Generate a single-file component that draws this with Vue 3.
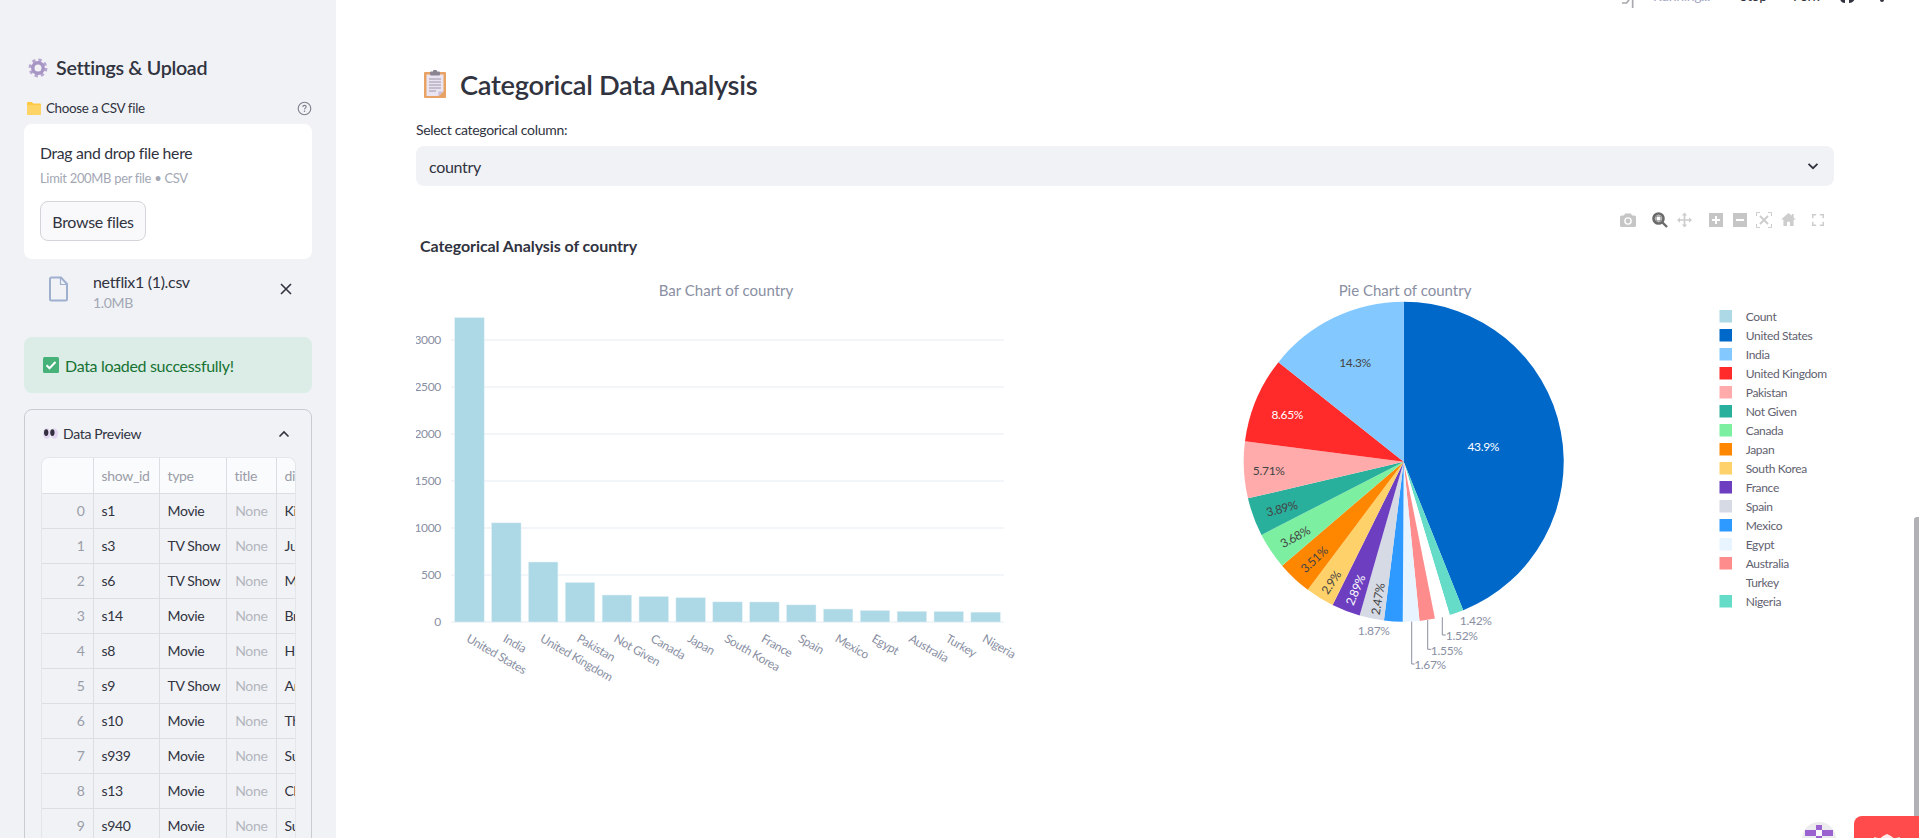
<script setup>
const rows = [
  ['s1', 'Movie', 'Kirsten Johnson'],
  ['s3', 'TV Show', 'Julien Leclercq'],
  ['s6', 'TV Show', 'Mike Flanagan'],
  ['s14', 'Movie', 'Bruno Garotti'],
  ['s8', 'Movie', 'Haile Gerima'],
  ['s9', 'TV Show', 'Andy Devonshire'],
  ['s10', 'Movie', 'Theodore Melfi'],
  ['s939', 'Movie', 'Sudhanshu Sarin'],
  ['s13', 'Movie', 'Christian Schwochow'],
  ['s940', 'Movie', 'Suhas Kadav']
]

const countries = [
  { name: 'United States', pct: 43.9, color: '#0068c9' },
  { name: 'India', pct: 14.3, color: '#83c9ff' },
  { name: 'United Kingdom', pct: 8.65, color: '#ff2b2b' },
  { name: 'Pakistan', pct: 5.71, color: '#ffabab' },
  { name: 'Not Given', pct: 3.89, color: '#29b09d' },
  { name: 'Canada', pct: 3.68, color: '#7defa1' },
  { name: 'Japan', pct: 3.51, color: '#ff8700' },
  { name: 'South Korea', pct: 2.9, color: '#ffd16a' },
  { name: 'France', pct: 2.89, color: '#6d3fc0' },
  { name: 'Spain', pct: 2.47, color: '#d5dae5' },
  { name: 'Mexico', pct: 1.87, color: '#2e9aff' },
  { name: 'Egypt', pct: 1.67, color: '#e8f4ff' },
  { name: 'Australia', pct: 1.55, color: '#ff8c8c' },
  { name: 'Turkey', pct: 1.52, color: '#ffffff' },
  { name: 'Nigeria', pct: 1.42, color: '#64dcc8' }
]

// bar chart, in page coordinates (see the svg viewBox)
const baseY = 622
const yScale = 47 / 500
const pitch = 36.87
const ticks = [0, 500, 1000, 1500, 2000, 2500, 3000]
const tickY = (v) => baseY - v * yScale
const bars = countries.map((c, i) => {
  const value = c.pct * 73.76
  const center = 451 + pitch * (i + 0.5)
  return { name: c.name, x: center - 14.75, center, h: value * yScale }
})

// pie: first slice from 12 o'clock, the rest run back from the smallest
const cx = 1403.7
const cy = 461.7
const r = 160
const total = countries.reduce((s, c) => s + c.pct, 0)
const pieOrder = [countries[0], ...countries.slice(1).reverse()]
let acc = 0
const slices = pieOrder.map((c) => {
  const a0 = (acc / total) * Math.PI * 2
  acc += c.pct
  const a1 = (acc / total) * Math.PI * 2
  const large = a1 - a0 > Math.PI ? 1 : 0
  const p = (a) => `${(cx + r * Math.sin(a)).toFixed(2)} ${(cy - r * Math.cos(a)).toFixed(2)}`
  return { color: c.color, d: `M${cx} ${cy}L${p(a0)}A${r} ${r} 0 ${large} 1 ${p(a1)}Z` }
})

const pieLabels = [
  { t: '43.9%', x: 1483.3, y: 446.7, fill: '#fff', rot: 0 },
  { t: '14.3%', x: 1355, y: 362, fill: '#444', rot: 0 },
  { t: '8.65%', x: 1287.3, y: 414, fill: '#fff', rot: 0 },
  { t: '5.71%', x: 1268.7, y: 470, fill: '#444', rot: 0 },
  { t: '3.89%', x: 1281.7, y: 508.3, fill: '#444', rot: -15 },
  { t: '3.68%', x: 1295, y: 536.7, fill: '#444', rot: -29 },
  { t: '3.51%', x: 1314, y: 559.3, fill: '#444', rot: -43 },
  { t: '2.9%', x: 1331, y: 582.3, fill: '#444', rot: -56 },
  { t: '2.89%', x: 1355.3, y: 590, fill: '#fff', rot: -67 },
  { t: '2.47%', x: 1377.7, y: 599, fill: '#444', rot: -80 },
  { t: '1.87%', x: 1373.7, y: 630, fill: '#8a8fa3', rot: 0 },
  { t: '1.42%', x: 1475.7, y: 620, fill: '#8a8fa3', rot: 0 },
  { t: '1.52%', x: 1461.7, y: 635, fill: '#8a8fa3', rot: 0 },
  { t: '1.55%', x: 1446.7, y: 650, fill: '#8a8fa3', rot: 0 },
  { t: '1.67%', x: 1430, y: 664, fill: '#8a8fa3', rot: 0 }
]

const legend = [{ name: 'Count', color: '#add8e6' }, ...countries]
</script>

<template>
  <div class="page">
    <aside class="sidebar">
      <h3 class="side-title">
        <svg class="emoji-gear" viewBox="0 0 20 20">
          <circle cx="10" cy="10" r="7.6" fill="none" stroke="#b7a6d0" stroke-width="3.6" stroke-dasharray="3.1 2.9" />
          <circle cx="10" cy="10" r="5.2" fill="none" stroke="#a795c4" stroke-width="3.4" />
          <circle cx="10" cy="10" r="2.6" fill="#f3f1f6" />
        </svg>
        Settings &amp; Upload
      </h3>

      <div class="field-label">
        <svg class="emoji-folder" viewBox="0 0 14 13">
          <path d="M0 1.2C0 .5.5 0 1.2 0h3.6l1.6 1.6h6.4c.7 0 1.2.5 1.2 1.2v9c0 .7-.5 1.2-1.2 1.2H1.2C.5 13 0 12.500 0 11.800Z" fill="#ffc843" />
          <rect x="0" y="3" width="14" height="10" rx="1" fill="#ffd466" />
        </svg>
        <span>Choose a CSV file</span>
        <svg class="help" viewBox="0 0 16 16">
          <circle cx="8" cy="8" r="6.7" fill="none" stroke="#7d808c" stroke-width="1.200" />
          <path d="M6.200 6.300c0-1 .8-1.700 1.800-1.700s1.800.7 1.800 1.600c0 1.300-1.800 1.400-1.800 2.800" fill="none" stroke="#7d808c" stroke-width="1.200" />
          <circle cx="8" cy="11" r=".8" fill="#7d808c" />
        </svg>
      </div>

      <div class="dropzone">
        <div class="drop-title">Drag and drop file here</div>
        <div class="drop-hint">Limit 200MB per file • CSV</div>
        <button class="browse">Browse files</button>
      </div>

      <div class="file-row">
        <svg class="file-icon" viewBox="0 0 20 26">
          <path d="M2.500 1.500h9.500l6 6.500v15a1.500 1.500 0 0 1-1.500 1.500h-14A1.500 1.500 0 0 1 1 23V3a1.500 1.500 0 0 1 1.500-1.500Z" fill="none" stroke="#9fb0cf" stroke-width="2" />
          <path d="M11.500 1.500v7h6.500" fill="none" stroke="#9fb0cf" stroke-width="1.200" />
        </svg>
        <div class="file-meta">
          <div class="file-name">netflix1 (1).csv</div>
          <div class="file-size">1.0MB</div>
        </div>
        <svg class="file-x" viewBox="0 0 12 12">
          <path d="M1 1l10 10M11 1L1 11" stroke="#31333f" stroke-width="1.600" fill="none" />
        </svg>
      </div>

      <div class="success">
        <svg class="emoji-check" viewBox="0 0 16 16">
          <rect width="16" height="16" rx="1.500" fill="#46b27a" />
          <path d="M3.500 8.300l3 3 6-6.300" stroke="#fff" stroke-width="2" fill="none" />
        </svg>
        Data loaded successfully!
      </div>

      <div class="expander">
        <div class="exp-head">
          <svg class="emoji-eyes" viewBox="0 0 16 11">
            <ellipse cx="4" cy="5.500" rx="4" ry="5.500" fill="#e2d6f0" />
            <ellipse cx="12" cy="5.500" rx="4" ry="5.500" fill="#e2d6f0" />
            <ellipse cx="3.400" cy="4.500" rx="2.300" ry="3.600" fill="#34303f" />
            <ellipse cx="10" cy="4.500" rx="2.300" ry="3.600" fill="#34303f" />
          </svg>
          <span>Data Preview</span>
          <svg class="chev-up" viewBox="0 0 12 8">
            <path d="M1.500 6.500L6 2l4.500 4.500" stroke="#31333f" stroke-width="1.600" fill="none" />
          </svg>
        </div>
        <div class="table-wrap">
          <table class="preview">
            <thead>
              <tr>
                <th class="c-idx"></th>
                <th class="c-id">show_id</th>
                <th class="c-type">type</th>
                <th class="c-title">title</th>
                <th class="c-dir">director</th>
              </tr>
            </thead>
            <tbody>
              <tr v-for="(row, i) in rows" :key="row[0]">
                <td class="idx">{{ i }}</td>
                <td>{{ row[0] }}</td>
                <td>{{ row[1] }}</td>
                <td class="none">None</td>
                <td class="dir">{{ row[2] }}</td>
              </tr>
            </tbody>
          </table>
        </div>
      </div>
    </aside>

    <main class="main">
      <h2 class="title">
        <svg class="emoji-clip" viewBox="0 0 22 28">
          <rect y="2" width="22" height="26" rx="1" fill="#e8a263" />
          <path d="M2.500 4.500h17v17l-5 4.500h-12Z" fill="#e9e3f2" />
          <path d="M14.500 26v-4.500h5Z" fill="#c9bfd6" />
          <rect x="6" y="1.500" width="10" height="4" rx="1" fill="#8b8492" />
          <rect x="9" y="0" width="4" height="3" rx="1" fill="#8b8492" />
          <path d="M5 9h12M5 12h12M5 15h12M5 18h12M5 21h7" stroke="#9c96a6" stroke-width="1" />
        </svg>
        Categorical Data Analysis
      </h2>

      <label class="sel-label">Select categorical column:</label>
      <div class="select">
        <span>country</span>
        <svg class="chev-down" viewBox="0 0 12 8">
          <path d="M1.500 1.800L6 6.200l4.500-4.400" stroke="#31333f" stroke-width="1.800" fill="none" />
        </svg>
      </div>

      <div class="chart">
        <div class="modebar">
          <svg class="mb m-cam" viewBox="0 0 16 14"><path d="M0 4a1.500 1.500 0 0 1 1.500-1.500H4L5 .5h6l1 2h2.500A1.500 1.500 0 0 1 16 4v8.500a1.500 1.500 0 0 1-1.500 1.500h-13A1.500 1.500 0 0 1 0 12.500Z" fill="#c6c6c6" /><circle cx="8" cy="8" r="3.800" fill="#fff" /><circle cx="8" cy="8" r="2.400" fill="#c6c6c6" /></svg>
          <svg class="mb m-zoom" viewBox="0 0 16 16"><circle cx="6.500" cy="6.500" r="5" fill="none" stroke="#6a6a6a" stroke-width="2.600" /><rect x="4" y="4" width="5" height="5" fill="#fff" stroke="#6a6a6a" stroke-width="1" /><path d="M10.500 10.500l4.500 4.500" stroke="#6a6a6a" stroke-width="2.400" /></svg>
          <svg class="mb m-pan" viewBox="0 0 16 16"><path d="M8 2v12M2 8h12" stroke="#cdcdcd" stroke-width="1.800" /><path d="M8 0l2.800 3.200H5.200ZM8 16l-2.800-3.200h5.600ZM0 8l3.200-2.800v5.600ZM16 8l-3.200 2.800V5.200Z" fill="#cdcdcd" /></svg>
          <svg class="mb m-plus" viewBox="0 0 14 14"><rect width="14" height="14" fill="#c6c6c6" /><path d="M7 3v8M3 7h8" stroke="#fff" stroke-width="2" /></svg>
          <svg class="mb m-minus" viewBox="0 0 14 14"><rect width="14" height="14" fill="#c6c6c6" /><path d="M3 7h8" stroke="#fff" stroke-width="2" /></svg>
          <svg class="mb m-auto" viewBox="0 0 16 16"><path d="M.5 4V.5H4M12 .5h3.500V4M15.500 12v3.500H12M4 15.500H.5V12" fill="none" stroke="#cdcdcd" stroke-width="1" /><path d="M4 4l8 8M12 4l-8 8" stroke="#cdcdcd" stroke-width="2" /></svg>
          <svg class="mb m-home" viewBox="0 0 16 14"><path d="M8 0L0 7h2.500v7h4V9.500h3V14h4V7H16l-2.500-2.200V1h-2v2Z" fill="#cdcdcd" /></svg>
          <svg class="mb m-full" viewBox="0 0 13 13"><path d="M.8 4.500V.8h3.700M8.500.8h3.700v3.700M12.200 8.500v3.700H8.500M4.500 12.200H.8V8.500" fill="none" stroke="#cdcdcd" stroke-width="1.600" /></svg>
        </div>

        <svg class="plot" viewBox="416 226 1418 470" width="1418" height="470">
          <text x="420" y="252" class="plot-head">Categorical Analysis of country</text>
          <text x="726" y="296" class="sub-title" text-anchor="middle">Bar Chart of country</text>
          <text x="1405" y="296" class="sub-title" text-anchor="middle">Pie Chart of country</text>

          <g v-for="t in ticks" :key="t">
            <line x1="451" x2="1004" :y1="tickY(t)" :y2="tickY(t)" stroke="#e6ecf3" stroke-width="1" />
            <text x="441" :y="tickY(t) + 4" class="tick" text-anchor="end">{{ t }}</text>
          </g>
          <g v-for="b in bars" :key="b.name">
            <rect :x="b.x" :y="baseY - b.h" width="29.500" :height="b.h" fill="#add8e6" stroke="#e3f1f6" stroke-width=".5" />
            <text :transform="`translate(${b.center - 4} 641) rotate(30)`" class="tick">{{ b.name }}</text>
          </g>

          <path v-for="s in slices" :key="s.d" :d="s.d" :fill="s.color" />
          <path d="M1442.300 617.300V635h3.500M1427.700 620v29.300h3.500M1411.700 621.700V664h3" fill="none" stroke="#8a8fa3" stroke-width="1" />
          <text
            v-for="l in pieLabels"
            :key="l.t"
            :transform="`translate(${l.x} ${l.y}) rotate(${l.rot})`"
            :fill="l.fill"
            class="pie-label"
            text-anchor="middle"
            dominant-baseline="central"
          >{{ l.t }}</text>

          <g v-for="(item, i) in legend" :key="item.name">
            <rect x="1719.500" :y="310 + i * 19" width="12.500" height="12.500" :fill="item.color" />
            <text x="1745.700" :y="320.500 + i * 19" class="legend">{{ item.name }}</text>
          </g>
        </svg>
      </div>
    </main>

    <div class="toolbar">
      <svg class="run-icon" viewBox="0 0 16 16">
        <path d="M2 10.700h5l3-4M13.500 3v13" fill="none" stroke="#a9a9ad" stroke-width="1.800" />
      </svg>
      <span class="tb-running">Running...</span>
      <span class="tb-btn tb-stop">Stop</span>
      <span class="tb-btn tb-fork">Fork</span>
      <svg class="tb-git" viewBox="0 0 16 16"><path d="M0 11c0 3 2 5 5 5V11ZM9 11h6c-.5 3-3 5-6 5Z" fill="#31333f" /></svg>
      <svg class="tb-dots" viewBox="0 0 4 4"><circle cx="2" cy="1" r="2" fill="#31333f" /></svg>
    </div>

    <div class="scrollbar"></div>

    <div class="viewer-badge">
      <svg viewBox="0 0 34 34" width="34" height="34">
        <circle cx="17" cy="17" r="17" fill="#ececef" />
        <rect x="14" y="8" width="6" height="6" fill="#faf8fc" />
        <path d="M14 3h6v5h-6ZM3 8h11v6H3ZM20 8h11v6H20ZM14 14h6v6h-6Z" fill="#9a62cf" />
      </svg>
    </div>
    <div class="hosted">
      <svg viewBox="0 0 28 14" width="28" height="14">
        <path d="M1 3l6 1.500L10 2l4-2 4 2 3 2.500L27 3l-3 11H4Z" fill="#ffeaea" />
      </svg>
    </div>
  </div>
</template>

<style scoped>
.page {
  position: relative;
  display: flex;
  width: 1919px;
  height: 838px;
  overflow: hidden;
  background: #fff;
  color: #31333f;
  font-family: Lato, "Noto Sans", sans-serif;
  letter-spacing: -0.02em;
}

/* sidebar */
.sidebar {
  width: 336px;
  flex-shrink: 0;
  height: 838px;
  overflow: hidden;
  box-sizing: border-box;
  padding: 54px 24px 0;
  background: #f0f2f6;
}
.side-title {
  display: flex;
  align-items: center;
  gap: 8px;
  margin: 0 0 16px 4px;
  font-size: 19.7px;
  line-height: 28px;
  font-weight: 600;
}
.emoji-gear { width: 20px; height: 20px; }
.field-label {
  display: flex;
  align-items: center;
  height: 20px;
  margin: 0 0 6px 3px;
  font-size: 13.4px;
  gap: 5px;
}
.emoji-folder { width: 14px; height: 13px; }
.help { width: 15px; height: 15px; margin-left: auto; }
.dropzone {
  box-sizing: border-box;
  height: 135px;
  padding: 16px;
  background: #fff;
  border-radius: 8px;
}
.drop-title { font-size: 15.8px; line-height: 25px; }
.drop-hint { font-size: 13px; line-height: 20px; margin-top: 3px; color: #a3a8b4; }
.browse {
  display: block;
  width: 106px;
  height: 40px;
  margin-top: 13px;
  padding: 0;
  border: 1px solid #d3d5da;
  border-radius: 8px;
  background: #f9f9fb;
  color: #31333f;
  font: inherit;
  font-size: 16px;
  letter-spacing: inherit;
}
.file-row {
  display: flex;
  align-items: center;
  height: 60px;
  padding-left: 25px;
}
.file-icon { width: 20px; height: 26px; }
.file-meta { margin-left: 24px; padding-top: 4px; }
.file-name { font-size: 16px; line-height: 24px; }
.file-size { font-size: 14px; line-height: 18px; color: #a3a8b4; }
.file-x { width: 12px; height: 12px; margin-left: auto; margin-right: 20px; }
.success {
  display: flex;
  align-items: center;
  gap: 6px;
  height: 56px;
  margin-top: 18px;
  padding-left: 19px;
  border-radius: 8px;
  background: #dbede6;
  color: #177233;
  font-size: 16px;
}
.emoji-check { width: 16px; height: 16px; }
.expander {
  height: 500px;
  margin-top: 16px;
  padding: 0 16px;
  border: 1px solid #c9ccd2;
  border-radius: 8px;
}
.exp-head {
  display: flex;
  align-items: center;
  height: 47px;
  padding-left: 2px;
  gap: 5px;
  font-size: 14px;
}
.emoji-eyes { width: 15px; height: 11px; }
.chev-up { width: 12px; height: 8px; margin-left: auto; margin-right: 5px; }
.table-wrap {
  width: 253px;
  overflow: hidden;
  border: 1px solid #e4e6ea;
  border-bottom: 0;
  border-radius: 8px 8px 0 0;
}
.preview {
  table-layout: fixed;
  width: 364px;
  border-collapse: collapse;
  font-size: 14px;
}
.preview th, .preview td {
  height: 35px;
  box-sizing: border-box;
  padding: 0 8px;
  border-right: 1px solid #dcdee3;
  border-bottom: 1px solid #dcdee3;
  text-align: left;
  font-weight: 400;
  white-space: nowrap;
  overflow: hidden;
}
.preview th { background: #fafbfc; color: #9a9da8; }
.c-idx { width: 51px; }
.c-id { width: 66px; }
.c-type { width: 67px; }
.c-title { width: 50px; }
.c-dir { width: 130px; }
.preview td.idx { text-align: right; color: #9a9da8; }
.preview td.none { text-align: right; color: #b4b6bd; }

/* main */
.main {
  flex: 1;
  min-width: 0;
  box-sizing: border-box;
  padding: 60px 85px 0 80px;
}
.title {
  display: flex;
  align-items: center;
  gap: 14px;
  height: 48px;
  margin: 0 0 12px 8px;
  font-size: 27.3px;
  font-weight: 600;
}
.emoji-clip { width: 22px; height: 28px; }
.sel-label {
  display: block;
  height: 20px;
  margin-bottom: 6px;
  font-size: 14px;
  line-height: 20px;
}
.select {
  display: flex;
  align-items: center;
  justify-content: space-between;
  height: 40px;
  padding: 0 15px 0 13px;
  border-radius: 8px;
  background: #f0f2f6;
  font-size: 16px;
}
.chev-down { width: 12px; height: 8px; }
.chart { position: relative; margin-top: 40px; }
.plot { display: block; }
.plot-head { font-size: 16px; font-weight: 700; fill: #31333f; letter-spacing: -0.005em; }
.sub-title { font-size: 15px; fill: #8a8fa3; letter-spacing: 0; }
.tick { font-size: 12px; fill: #8a8fa3; }
.pie-label { font-size: 12px; }
.legend { font-size: 12px; fill: #5f6170; }

.modebar { position: absolute; inset: 0; pointer-events: none; }
.mb { position: absolute; }
.m-cam { left: 1204px; top: -13px; width: 16px; height: 14px; }
.m-zoom { left: 1236px; top: -14px; width: 16px; height: 16px; }
.m-pan { left: 1261px; top: -14px; width: 15px; height: 16px; }
.m-plus { left: 1293px; top: -13px; width: 14px; height: 14px; }
.m-minus { left: 1317px; top: -13px; width: 14px; height: 14px; }
.m-auto { left: 1340px; top: -14px; width: 16px; height: 16px; }
.m-home { left: 1365px; top: -13px; width: 15px; height: 13px; }
.m-full { left: 1396px; top: -12px; width: 12px; height: 12px; }

/* clipped streamlit header above the fold */
.toolbar {
  position: absolute;
  left: 1620px;
  top: -21px;
  display: flex;
  align-items: center;
  height: 32px;
  font-size: 14px;
  color: #31333f;
}
.run-icon { width: 15px; height: 15px; margin-top: 10px; }
.tb-running { margin-left: 18px; width: 87px; color: #a4a9c4; }
.tb-btn { width: 53px; }
.tb-git { width: 16px; height: 16px; margin-left: -6px; }
.tb-dots { width: 4px; height: 4px; margin-left: 24px; margin-top: 12px; }

.scrollbar {
  position: absolute;
  right: 0;
  top: 517px;
  bottom: 0;
  width: 5px;
  border-radius: 3px 0 0 3px;
  background: #b0b0b5;
}
.viewer-badge {
  position: absolute;
  left: 1802px;
  top: 822px;
  height: 34px;
  width: 34px;
}
.hosted {
  position: absolute;
  left: 1854px;
  top: 816px;
  width: 65px;
  height: 40px;
  padding: 16px 0 0 19px;
  box-sizing: border-box;
  border-radius: 8px 0 0 0;
  background: #ff4b4b;
}
</style>
